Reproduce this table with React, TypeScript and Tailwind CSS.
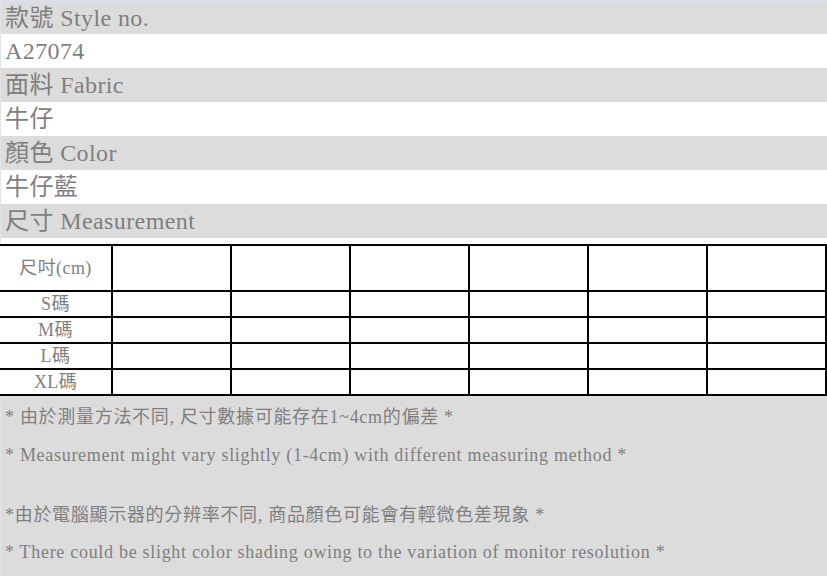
const font = "font-['Liberation_Serif','Noto_Sans_CJK_TC',serif]";

const info: { text: string; gray: boolean }[] = [
  { text: "款號 Style no.", gray: true },
  { text: "A27074", gray: false },
  { text: "面料 Fabric", gray: true },
  { text: "牛仔", gray: false },
  { text: "顏色 Color", gray: true },
  { text: "牛仔藍", gray: false },
  { text: "尺寸 Measurement", gray: true },
];

const sizes = ["S碼", "M碼", "L碼", "XL碼"];
const cols = [0, 1, 2, 3, 4, 5];

export default function App() {
  return (
    <div className={`w-[827px] h-[576px] overflow-hidden bg-white text-[#7f7f7f] ${font}`}>
      <div className="h-[2px] bg-[#dcdfe9]" />
      {info.map((row, i) => (
        <div
          key={row.text}
          className={`flex items-center border-l border-[#e4e4e4] pl-[4px] text-[24px] leading-none tracking-[0.4px] ${
            i === 0 ? "h-[32px]" : "h-[34px]"
          } ${row.gray ? "bg-[#dcdcdc]" : "bg-white"}`}
        >
          {row.text}
        </div>
      ))}
      <div className="h-[6px] border-l border-[#e4e4e4] bg-white" />
      <table className="w-[827px] table-fixed border-collapse bg-white text-[18px] leading-none tracking-[0.4px]">
        <colgroup>
          <col className="w-[112px]" />
          {cols.map((c) => (
            <col key={c} className="w-[119px]" />
          ))}
        </colgroup>
        <tbody>
          <tr className="h-[46px]">
            <td className="border-y-2 border-r-2 border-black text-center">尺吋(cm)</td>
            {cols.map((c) => (
              <td key={c} className="border-2 border-black" />
            ))}
          </tr>
          {sizes.map((s) => (
            <tr key={s} className="h-[26px]">
              <td className="border-y-2 border-r-2 border-black text-center">{s}</td>
              {cols.map((c) => (
                <td key={c} className="border-2 border-black" />
              ))}
            </tr>
          ))}
        </tbody>
      </table>
      <div className="h-[181px] border-l border-[#e4e4e4] bg-[#dcdcdc] pl-[4px] pt-[9px] text-[18px] leading-[24px] tracking-[0.7px]">
        <p>* 由於測量方法不同, 尺寸數據可能存在1~4cm的偏差 *</p>
        <p className="mt-[14px]">* Measurement might vary slightly (1-4cm) with different measuring method *</p>
        <p className="mt-[36px]">*由於電腦顯示器的分辨率不同, 商品顏色可能會有輕微色差現象 *</p>
        <p className="mt-[13px]">* There could be slight color shading owing to the variation of monitor resolution *</p>
      </div>
    </div>
  );
}
